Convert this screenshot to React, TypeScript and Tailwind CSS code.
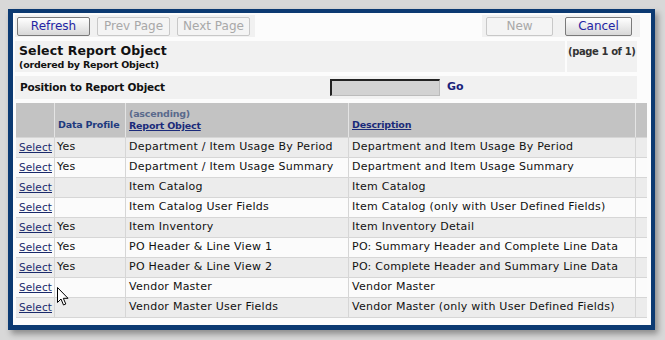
import React from "react";

const rows: [string, string, string][] = [
  ["Yes", "Department / Item Usage By Period", "Department and Item Usage By Period"],
  ["Yes", "Department / Item Usage Summary", "Department and Item Usage Summary"],
  ["", "Item Catalog", "Item Catalog"],
  ["", "Item Catalog User Fields", "Item Catalog (only with User Defined Fields)"],
  ["Yes", "Item Inventory", "Item Inventory Detail"],
  ["Yes", "PO Header & Line View 1", "PO: Summary Header and Complete Line Data"],
  ["Yes", "PO Header & Line View 2", "PO: Complete Header and Summary Line Data"],
  ["", "Vendor Master", "Vendor Master"],
  ["", "Vendor Master User Fields", "Vendor Master (only with User Defined Fields)"],
];

function Btn({ label, disabled, w }: { label: string; disabled?: boolean; w: string }) {
  return (
    <div
      className={
        "h-[19px] flex items-center justify-center rounded-[2px] text-[12px] " +
        w +
        (disabled
          ? " border border-[#c8c8c8] bg-[#f4f4f4] text-[#a8a8a8]"
          : " border border-[#7a7a7a] bg-gradient-to-b from-[#ffffff] to-[#d8d8d8] text-[#2424a4]")
      }
    >
      {label}
    </div>
  );
}

function Cursor() {
  return (
    <svg width="13" height="20" viewBox="0 0 13 20" className="absolute left-[2px] top-[9px]">
      <path d="M0.5 0.5 L0.5 15.5 L4 12 L6.5 18 L8.8 17 L6.3 11.3 L11 11.3 Z" fill="#fff" stroke="#000" strokeWidth="1" />
    </svg>
  );
}

export default function App() {
  return (
    <div className="w-[665px] h-[340px] bg-[#d8d8d8] overflow-hidden pt-[9px] pl-[8px] font-['DejaVu_Sans',sans-serif]">
      <div className="w-[647px] h-[321px] bg-[#0c3a72] pt-[4px] pl-[5px] shadow-[3px_4px_6px_rgba(0,0,0,0.35)]">
        <div className="w-[638px] h-[312px] bg-[#fcfcfc] pt-[2px] pl-[2px]">
          {/* button bar */}
          <div className="flex h-[22px]">
            <div className="w-[240px] bg-[#f1f1f1] flex items-center pl-[2px] gap-[7px]">
              <Btn label="Refresh" w="w-[73px]" />
              <Btn label="Prev Page" disabled w="w-[73px]" />
              <Btn label="Next Page" disabled w="w-[73px]" />
            </div>
            <div className="w-[227px]" />
            <div className="w-[158px] bg-[#f1f1f1] flex items-center pl-[4px] gap-[12px]">
              <Btn label="New" disabled w="w-[67px]" />
              <Btn label="Cancel" w="w-[67px]" />
            </div>
          </div>
          {/* title */}
          <div className="flex mt-[4px] h-[31px] w-[622px] gap-[2px]">
            <div className="flex-1 bg-[#f1f1f1] pl-[4px] pt-[2px]">
              <div className="text-[12.5px] font-bold text-[#111] leading-[16px] tracking-[0.1px]">Select Report Object</div>
              <div className="text-[9.5px] font-bold text-[#111] leading-[12px] tracking-[-0.2px]">(ordered by Report Object)</div>
            </div>
            <div className="w-[70px] bg-[#f1f1f1] pt-[3px] pl-[1px] text-[10px] font-bold text-[#333] tracking-[-0.4px] whitespace-nowrap overflow-visible">
              (page 1 of 1)
            </div>
          </div>
          {/* position row */}
          <div className="flex items-center mt-[4px] h-[23px] w-[622px] bg-[#f1f1f1]">
            <div className="w-[315px] pl-[5px] text-[10.5px] font-bold text-[#111] tracking-[-0.2px]">Position to Report Object</div>
            <div className="w-[110px] h-[17px] border-t-[2px] border-l-[2px] border-[#222] border-r border-b border-r-[#bbb] border-b-[#bbb] bg-[#d2d2d2]" />
            <div className="ml-[7px] text-[11px] font-bold text-[#1a237a]">Go</div>
          </div>
          {/* table */}
          <div className="mt-[4px] ml-[1px] w-[631px]">
            <div className="grid grid-cols-[39px_71px_223px_287px_11px] h-[34px] bg-[#c3c3c3]">
              <div className="border-r border-[#e4e4e4]" />
              <div className="border-r border-[#e4e4e4] flex items-end pb-[5px] pl-[3px] text-[9.5px] font-bold text-[#1e3a7e] tracking-[-0.2px]">
                Data Profile
              </div>
              <div className="border-r border-[#e4e4e4] flex flex-col justify-end pb-[5px] pl-[3px] tracking-[-0.2px]">
                <div className="text-[9.5px] font-bold text-[#5a6a8c] leading-[12px]">(ascending)</div>
                <div className="text-[9.5px] font-bold text-[#1a2a7a] underline leading-[12px]">Report Object</div>
              </div>
              <div className="border-r border-[#e4e4e4] flex items-end pb-[5px] pl-[3px] text-[9.5px] font-bold text-[#1a2a7a] underline tracking-[-0.2px]">
                Description
              </div>
              <div />
            </div>
            {rows.map((r, i) => (
              <div
                key={i}
                className={
                  "grid grid-cols-[39px_71px_223px_287px_11px] h-[20px] border-t border-[#d6d6d6] text-[11px] text-[#111] tracking-[0.25px] " +
                  (i % 2 === 0 ? "bg-[#ececec]" : "bg-[#fbfbfb]")
                }
              >
                <div className="border-r border-[#d6d6d6] flex items-center pl-[3px]">
                  <span className="text-[#1a2a6c] underline text-[10.5px] tracking-[0.1px]">Select</span>
                </div>
                <div className="border-r border-[#d6d6d6] flex items-center pl-[2px] relative">
                  {r[0]}
                  {i === 7 && <Cursor />}
                </div>
                <div className="border-r border-[#d6d6d6] flex items-center pl-[3px] whitespace-nowrap">{r[1]}</div>
                <div className="border-r border-[#d6d6d6] flex items-center pl-[3px] whitespace-nowrap">{r[2]}</div>
                <div />
              </div>
            ))}
            <div className="border-t border-[#d6d6d6]" />
          </div>
        </div>
      </div>
    </div>
  );
}
